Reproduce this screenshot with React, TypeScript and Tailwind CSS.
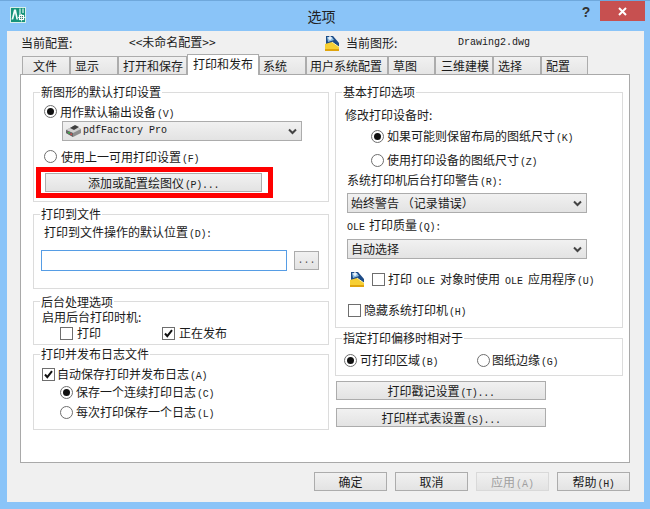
import React from "react";

const MONO = "font-['Liberation_Mono',monospace] text-[10px] leading-none";

const H = ({ children }: { children: React.ReactNode }) => (
  <span className="font-['Liberation_Mono',monospace] text-[10px] leading-none tracking-[-0.3px] ml-[1px] text-[#222]">{children}</span>
);

const Radio = ({ on }: { on?: boolean }) => (
  <span className="w-[13px] h-[13px] shrink-0 rounded-full border border-[#6e6e6e] bg-white flex items-center justify-center">
    {on && <span className="w-[7px] h-[7px] rounded-full bg-[#111]" />}
  </span>
);

const Check = ({ on }: { on?: boolean }) => (
  <span className="w-[13px] h-[13px] shrink-0 border border-[#6e6e6e] bg-white flex items-center justify-center">
    {on && (
      <svg width="11" height="11" viewBox="0 0 11 11">
        <path d="M2 5.5 L4.3 8.2 L9 2.2" fill="none" stroke="#111" strokeWidth="2" />
      </svg>
    )}
  </span>
);

const Group = ({ title, className, legend, children }: { title: string; className: string; legend?: string; children?: React.ReactNode }) => (
  <fieldset className={`border border-[#dcdcdc] min-w-0 ${className}`}>
    <legend className={`ml-[6px] px-[1px] ${legend ?? "h-4 leading-4"}`}>{title}</legend>
    {children}
  </fieldset>
);

const Btn = ({ className, children }: { className: string; children: React.ReactNode }) => (
  <div className={`border border-[#acacac] bg-gradient-to-b from-[#f1f1f1] to-[#e3e3e3] flex items-center justify-center ${className}`}>
    {children}
  </div>
);

const Chevron = () => (
  <svg width="9" height="7" viewBox="0 0 9 7" className="shrink-0">
    <path d="M1 1.5 L4.5 5 L8 1.5" fill="none" stroke="#444" strokeWidth="2" />
  </svg>
);

const Select = ({ className, children }: { className: string; children: React.ReactNode }) => (
  <div className={`h-5 border border-[#acacac] bg-gradient-to-b from-[#f1f1f1] to-[#e3e3e3] flex items-center pr-[4px] ${className}`}>
    <div className="flex-1 flex items-center min-w-0">{children}</div>
    <Chevron />
  </div>
);

const DrawingIcon = () => (
  <svg width="16" height="17" viewBox="0 0 16 17" className="shrink-0">
    <path d="M2 1 L9 1 L15 8 L15 12 L2 12 Z" fill="#1d4b87" />
    <path d="M3 2 L8 2 L10 5 L4 7 Z" fill="#8fbde0" />
    <path d="M6 1 V5 M4 3 H8" stroke="#fff" strokeWidth="1.2" />
    <path d="M1 9 L8 7 L15 12 L15 16 L1 16 Z" fill="#f7cf33" />
    <path d="M1 14 L15 14 L15 16 L1 16 Z" fill="#e0a40c" />
    <path d="M8 7 L15 12" stroke="#fff2a8" />
  </svg>
);

const PrinterIcon = () => (
  <svg width="17" height="14" viewBox="0 0 17 14" className="shrink-0">
    <path d="M1 6 L9 2 L16 5 L16 9 L8 13 L1 9 Z" fill="#8d8d8d" />
    <path d="M1 6 L8 9 L16 5 L9 2 Z" fill="#d0d0d0" />
    <path d="M5 4 L10 1 L14 3 L9 6 Z" fill="#3f3f3f" />
    <path d="M1 6 L8 9 L8 13 L1 9 Z" fill="#666" />
    <rect x="3" y="8" width="2" height="1.5" fill="#3fae49" />
    <rect x="5.5" y="9.5" width="1.5" height="1.5" fill="#d84a4a" />
  </svg>
);

const AppIcon = () => (
  <svg width="16" height="16" viewBox="0 0 16 16" className="shrink-0">
    <rect width="16" height="16" fill="#d6efe9" />
    <rect x="1" y="1" width="14" height="14" fill="#16937a" />
    <path d="M1.5 12.5 L4 2.5 L6 2.5 L8 12.5 L6.4 12.5 L5 6 L3.2 12.5 Z" fill="#f4fcfa" />
    <path d="M10 1.5 V8 M13 1.5 V6" stroke="#e6f7f3" strokeWidth="1.2" />
    <rect x="9.5" y="8.5" width="4" height="4" fill="#0c5f4d" stroke="#fff" strokeWidth="1.2" />
    <path d="M8 10.5 H15.5 M11.5 7 V14.5" stroke="#fff" strokeWidth="0.8" />
  </svg>
);

const tabs: [string, string][] = [
  ["文件", "w-[48px] pl-[10px]"],
  ["显示", "w-[48px] pl-[4px]"],
  ["打开和保存", "w-[69px] pl-[4px]"],
  ["打印和发布", "w-[72px] pl-[5px]"],
  ["系统", "w-[47px] pl-[3px]"],
  ["用户系统配置", "w-[82px] pl-[3px]"],
  ["草图", "w-[47px] pl-[4px]"],
  ["三维建模", "w-[58px] pl-[5px]"],
  ["选择", "w-[48px] pl-[4px]"],
  ["配置", "w-[47px] pl-[4px]"],
];

export default function App() {
  return (
    <div className="w-[650px] h-[509px] bg-[#8ac4f8] border-t border-[#6fa8dc] overflow-hidden flex flex-col text-[12px] leading-4 text-[#1a1a1a] font-['Noto_Sans_CJK_SC','Noto_Sans',sans-serif]">
      <div className="h-[30px] shrink-0 flex items-start">
        <div className="ml-[10px] mt-[6px]"><AppIcon /></div>
        <div className="flex-1 pl-[38px] text-center text-[14px] leading-[20px] mt-[5px] text-[#222]">选项</div>
        <div className="w-[14px] mt-[1px] text-[14px] leading-[20px] font-bold text-[#333] text-center font-['Liberation_Sans',sans-serif]">?</div>
        <div className="ml-[7px] mr-[5px] w-[45px] h-5 bg-[#c75050] flex items-center justify-center">
          <svg width="9" height="9" viewBox="0 0 9 9">
            <path d="M1 1 L8 8 M8 1 L1 8" stroke="#fff" strokeWidth="2" />
          </svg>
        </div>
      </div>

      <div className="ml-[7px] w-[637px] h-[471px] bg-[#f0f0f0] flex flex-col px-[13px]">
        <div className="h-[24px] shrink-0 flex items-center">
          <span className="ml-[1px] w-[108px] shrink-0">当前配置:</span>
          <span className="w-[195px] shrink-0 -mt-[3px]">&lt;&lt;未命名配置&gt;&gt;</span>
          <DrawingIcon />
          <span className="ml-[6px] w-[112px] shrink-0">当前图形:</span>
          <span className={MONO}>Drawing2.dwg</span>
        </div>

        <div className="h-[20px] shrink-0 flex items-end pl-[2px] relative z-10 -mb-[1px]">
          {tabs.map(([t, w], i) => (
            <div
              key={t}
              className={
                i === 3
                  ? `h-[21px] bg-white border border-b-0 border-[#acacac] flex items-center pb-[2px] ${w}`
                  : `h-[18px] mb-[1px] bg-gradient-to-b from-[#f1f1f1] to-[#e5e5e5] border border-b-0 border-[#acacac] flex items-center ${w}`
              }
            >
              {t}
            </div>
          ))}
        </div>

        <div className="w-[610px] h-[389px] bg-white border border-[#a9a9a9] flex gap-[6px] pl-[12px] pt-[9px] shrink-0">
          <div className="w-[296px] shrink-0 flex flex-col">
            <Group title="新图形的默认打印设置" className="h-[118px]">
              <div className="mt-[3px] ml-[10px] flex items-center h-4 gap-[3px]">
                <Radio on />
                <span className="mt-[1px]">用作默认输出设备<H>(V)</H></span>
              </div>
              <Select className="mt-[2px] ml-[28px] w-[240px]">
                <span className="ml-[2px]"><PrinterIcon /></span>
                <span className={`ml-[1px] ${MONO}`}>pdfFactory Pro</span>
              </Select>
              <div className="mt-[7px] ml-[10px] flex items-center h-4 gap-[4px]">
                <Radio />
                <span className="mt-[1px]">使用上一可用打印设置<H>(F)</H></span>
              </div>
              <div className="mt-[3px] ml-[2px] w-[237px] h-[31px] border-[5px] border-[#ff0000] pl-[4px] pt-[1px]">
                <Btn className="w-[217px] h-[19px]">
                  <span>添加或配置绘图仪<H>(P)...</H></span>
                </Btn>
              </div>
            </Group>

            <Group title="打印到文件" className="h-[83px] mt-[4px]">
              <div className="mt-[2px] ml-[10px]">打印到文件操作的默认位置<H>(D):</H></div>
              <div className="mt-[10px] ml-[7px] flex items-start">
                <div className="w-[246px] h-[21px] border border-[#569de5] bg-white" />
                <Btn className={`ml-[7px] mt-[1px] w-[25px] h-[19px] text-[#555] ${MONO}`}>...</Btn>
              </div>
            </Group>

            <Group title="后台处理选项" className="h-[51px] mt-[5px]" legend="h-[15px] leading-[15px]">
              <div className="ml-[8px]">启用后台打印时机:</div>
              <div className="flex items-center h-4">
                <span className="ml-[26px]"><Check /></span>
                <span className="ml-[4px] w-[85px]">打印</span>
                <Check on />
                <span className="ml-[4px]">正在发布</span>
              </div>
            </Group>

            <Group title="打印并发布日志文件" className="h-[84px] mt-[1px]">
              <div className="mt-[4px] ml-[8px] flex items-center h-4 gap-[2px]">
                <Check on />
                <span>自动保存打印并发布日志<H>(A)</H></span>
              </div>
              <div className="mt-[2px] ml-[26px] flex items-center h-4 gap-[3px]">
                <Radio on />
                <span>保存一个连续打印日志<H>(C)</H></span>
              </div>
              <div className="mt-[4px] ml-[26px] flex items-center h-4 gap-[3px]">
                <Radio />
                <span>每次打印保存一个日志<H>(L)</H></span>
              </div>
            </Group>
          </div>

          <div className="w-[288px] shrink-0 flex flex-col">
            <Group title="基本打印选项" className="h-[244px]">
              <div className="mt-[7px] ml-[9px]">修改打印设备时:</div>
              <div className="mt-[5px] ml-[35px] flex items-center h-4 gap-[3px]">
                <Radio on />
                <span>如果可能则保留布局的图纸尺寸<H>(K)</H></span>
              </div>
              <div className="mt-[8px] ml-[35px] flex items-center h-4 gap-[3px]">
                <Radio />
                <span>使用打印设备的图纸尺寸<H>(Z)</H></span>
              </div>
              <div className="mt-[4px] ml-[11px]">系统打印机后台打印警告<H>(R):</H></div>
              <Select className="mt-[5px] ml-[11px] w-[240px]">
                <span className="ml-[3px]">始终警告 （记录错误）</span>
              </Select>
              <div className="mt-[4px] ml-[11px]">
                <span className={MONO}>OLE</span>
                <span className="ml-[4px]">打印质量<H>(Q):</H></span>
              </div>
              <Select className="mt-[6px] ml-[11px] w-[240px]">
                <span className="ml-[3px]">自动选择</span>
              </Select>
              <div className="mt-[12px] ml-[13px] flex items-center h-4">
                <DrawingIcon />
                <span className="ml-[7px]"><Check /></span>
                <span className="ml-[3px]">
                  打印
                  <span className={`mx-[5px] ${MONO}`}>OLE</span>
                  对象时使用
                  <span className={`mx-[5px] ${MONO}`}>OLE</span>
                  应用程序<H>(U)</H>
                </span>
              </div>
              <div className="mt-[15px] ml-[12px] flex items-center h-4 gap-[3px]">
                <Check />
                <span>隐藏系统打印机<H>(H)</H></span>
              </div>
            </Group>

            <Group title="指定打印偏移时相对于" className="h-[46px] mt-[2px]">
              <div className="mt-[6px] ml-[8px] flex items-center h-4">
                <Radio on />
                <span className="ml-[3px] w-[117px]">可打印区域<H>(B)</H></span>
                <Radio />
                <span className="ml-[2px]">图纸边缘<H>(G)</H></span>
              </div>
            </Group>

            <Btn className="mt-[5px] ml-[1px] w-[210px] h-[19px]">
              <span>打印戳记设置<H>(T)...</H></span>
            </Btn>
            <Btn className="mt-[8px] ml-[1px] w-[210px] h-[19px]">
              <span>打印样式表设置<H>(S)...</H></span>
            </Btn>
          </div>
        </div>

        <div className="mt-[9px] flex justify-end gap-[8px] pr-[1px]">
          <Btn className="w-[73px] h-[19px] border-[#3399ff]">确定</Btn>
          <Btn className="w-[73px] h-[19px]">取消</Btn>
          <Btn className="w-[73px] h-[19px] border-[#d9d9d9] text-[#a0a0a0]">
            <span>应用<span className={`ml-[1px] ${MONO}`}>(A)</span></span>
          </Btn>
          <Btn className="w-[73px] h-[19px]"><span>帮助<H>(H)</H></span></Btn>
        </div>
      </div>
    </div>
  );
}
